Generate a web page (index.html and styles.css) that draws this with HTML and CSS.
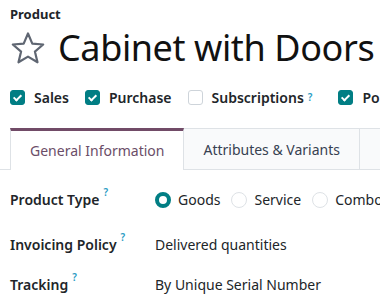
FILE: index.html
```html
<!DOCTYPE html>
<html lang="en">
<head>
    <meta charset="UTF-8">
    <meta name="viewport" content="width=device-width, initial-scale=1.0">
    <title>Cabinet with Doors</title>
    <link rel="stylesheet" href="styles.css">
</head>
<body>
    <div class="sheet">
        <div class="breadcrumb">Product</div>
        <div class="title-row">
            <svg class="star" width="36" height="34" viewBox="0 0 36 34">
                <polygon points="18,2.5 22.3,12.6 33.2,13.5 24.9,20.6 27.5,31.3 18,25.6 8.5,31.3 11.1,20.6 2.8,13.5 13.7,12.6" fill="none" stroke="#5f6672" stroke-width="2.2" stroke-linejoin="round"/>
            </svg>
            <h1>Cabinet with Doors</h1>
        </div>
        <div class="options">
            <label class="option"><span class="box checked"></span>Sales</label>
            <label class="option"><span class="box checked"></span>Purchase</label>
            <label class="option"><span class="box"></span>Subscriptions<sup>?</sup></label>
            <label class="option"><span class="box checked"></span>Point of Sale</label>
        </div>
    </div>
    <div class="tabs">
        <div class="tab active">General Information</div>
        <div class="tab">Attributes &amp; Variants</div>
        <div class="tab more">Sales</div>
    </div>
    <div class="fields">
        <div class="field-label first">Product Type<sup>?</sup></div>
        <div class="field-value first radios">
            <span class="radio on"></span><span class="radio-text">Goods</span>
            <span class="radio"></span><span class="radio-text">Service</span>
            <span class="radio"></span><span class="radio-text">Combo</span>
        </div>
        <div class="field-label">Invoicing Policy<sup>?</sup></div>
        <div class="field-value">Delivered quantities</div>
        <div class="field-label last">Tracking<sup>?</sup></div>
        <div class="field-value last">By Unique Serial Number</div>
    </div>
</body>
</html>
```

FILE: styles.css
```css
body {
    font-family: 'Noto Sans', sans-serif;
    color: #212529;
    background-color: #fff;
    margin: 0;
    padding: 0;
    overflow: hidden;
    white-space: nowrap;
}
.sheet {
    padding: 0 10px;
}
.breadcrumb {
    font-size: 13px;
    font-weight: bold;
    padding-top: 5px;
    line-height: 18px;
}
.title-row {
    display: flex;
    align-items: center;
    gap: 12px;
    height: 50px;
}
.star {
    flex: none;
}
h1 {
    font-size: 36px;
    letter-spacing: -0.4px;
    font-weight: normal;
    margin: 0;
    line-height: 50px;
    color: #111;
}
.options {
    display: flex;
    gap: 16px;
    margin-top: 13px;
    height: 22px;
    align-items: center;
}
.option {
    display: flex;
    align-items: center;
    font-size: 14px;
    font-weight: 600;
    color: #212529;
}
.box {
    width: 15px;
    height: 15px;
    border-radius: 3px;
    border: 1px solid #ced4da;
    box-sizing: border-box;
    margin-right: 9px;
    position: relative;
}
.box.checked {
    background-color: #017e84;
    border-color: #017e84;
}
.box.checked::after {
    content: "";
    position: absolute;
    left: 4px;
    top: 2px;
    width: 3px;
    height: 6px;
    border: solid #fff;
    border-width: 0 2px 2px 0;
    transform: rotate(45deg);
}
sup {
    font-size: 10px;
    color: #2b9cc4;
    margin-left: 4px;
    vertical-align: 9px;
    line-height: 0;
    font-weight: 600;
}
.option sup {
    margin-right: 10px;
}
.tabs {
    display: flex;
    margin-top: 20px;
    padding-left: 10px;
    border-bottom: 1px solid #dee2e6;
    height: 41px;
}
.tab {
    padding: 0 19px;
    font-size: 14px;
    color: #374151;
    background-color: #f9fafb;
    border: 1px solid #dee2e6;
    border-bottom: none;
    display: flex;
    align-items: center;
    margin-left: -1px;
}
.tab:first-child {
    margin-left: 0;
}
.tab.more {
    padding-left: 22px;
}
.tab.active {
    background-color: #fff;
    color: #6b4d68;
    border-top: 3px solid #714b67;
    margin-bottom: -1px;
    position: relative;
}
.fields {
    display: grid;
    grid-template-columns: 145px auto;
    padding: 19px 10px 0;
    font-size: 14px;
}
.field-label {
    font-weight: 600;
    height: 40px;
    line-height: 22px;
}
.field-value {
    height: 40px;
    line-height: 22px;
}
.field-label.first,
.field-value.first {
    height: 45px;
}
.field-label.last,
.field-value.last {
    height: 22px;
}
.radios {
    display: flex;
    align-items: flex-start;
}
.radio {
    width: 16px;
    height: 16px;
    border-radius: 50%;
    border: 1px solid #dee2e6;
    box-sizing: border-box;
    margin: 3px 7px 0 0;
}
.radio.on {
    border: 4.5px solid #017e84;
}
.radio-text {
    margin-right: 11px;
}
```
